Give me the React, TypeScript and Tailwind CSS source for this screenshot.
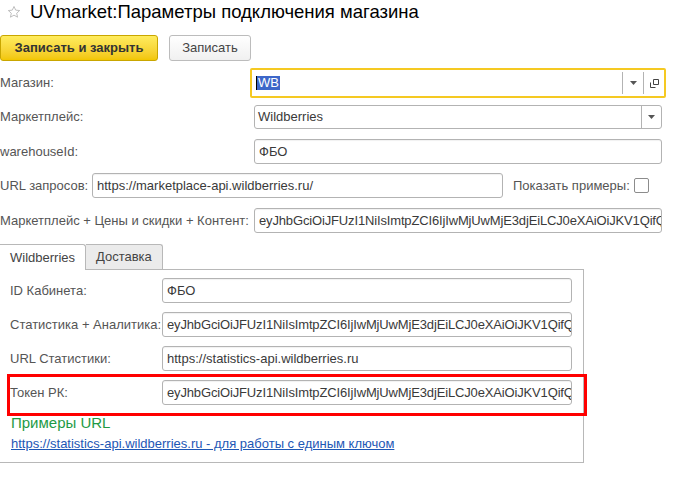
import React from "react";

const TOKEN =
  "eyJhbGciOiJFUzI1NiIsImtpZCI6IjIwMjUwMjE3djEiLCJ0eXAiOiJKV1QifQ.eyJlbnQiOjEsImV4cCI6MTc1NjA";

const Field = ({ value, className }: { value: string; className: string }) => (
  <div
    className={`h-[25px] flex items-center border border-[#b3b3b3] rounded-[3px] bg-white pl-[4px] text-[13px] text-[#3a3a3a] whitespace-nowrap overflow-hidden shadow-[inset_0_1px_1px_rgba(0,0,0,0.06)] ${className}`}
  >
    {value}
  </div>
);

const Arrow = () => (
  <svg width="7" height="4" viewBox="0 0 7 4">
    <path d="M0 0h7L3.5 4z" fill="#555" />
  </svg>
);

const Label = ({ text, className }: { text: string; className: string }) => (
  <div className={`text-[13px] text-[#555] whitespace-nowrap ${className}`}>{text}</div>
);

export default function App() {
  return (
    <div className="w-[697px] h-[491px] bg-white overflow-hidden font-['Liberation_Sans',Arial,sans-serif]">
      {/* title */}
      <div className="h-[24px] flex items-center">
        <svg width="14" height="14" viewBox="0 0 24 24" className="ml-[7px] mr-[9px]">
          <path
            d="M12 2.5l2.9 6.3 6.8.7-5.1 4.6 1.5 6.8L12 17.4l-6.1 3.5 1.5-6.8-5.1-4.6 6.8-.7z"
            fill="none"
            stroke="#b0b0b0"
            strokeWidth="1.4"
            strokeLinejoin="round"
          />
        </svg>
        <span className="text-[18.5px] text-black">UVmarket:Параметры подключения магазина</span>
      </div>

      {/* buttons */}
      <div className="mt-[11px] flex gap-[11px]">
        <div className="w-[158px] h-[26px] flex items-center justify-center rounded-[3px] border border-[#c9a600] bg-gradient-to-b from-[#ffec5c] to-[#f2c600] text-[13px] font-bold text-[#333]">
          Записать и закрыть
        </div>
        <div className="w-[82px] h-[26px] flex items-center justify-center rounded-[3px] border border-[#bcbcbc] bg-gradient-to-b from-white to-[#f0f0f0] text-[13px] text-[#444]">
          Записать
        </div>
      </div>

      {/* Магазин */}
      <div className="mt-[7px] h-[30px] flex items-center">
        <Label text="Магазин:" className="w-[250px]" />
        <div className="w-[416px] h-[30px] border-2 border-[#f5c922] rounded-[2px] flex items-center">
          <div className="flex-1 flex items-center pl-[4px]">
            <span className="w-px h-[14px] bg-black" />
            <span className="bg-[#3d67c9] text-white text-[13px] leading-[14px] px-[1px]">WB</span>
          </div>
          <div className="w-[21px] h-[22px] border-l border-[#b3b3b3] flex items-center justify-center">
            <Arrow />
          </div>
          <div className="w-[21px] h-[22px] border-l border-[#b3b3b3] flex items-center justify-center">
            <svg width="9" height="9" viewBox="0 0 9 9">
              <path d="M3.5 0.5h5v5h-5z M0.5 3.5v5h5" fill="none" stroke="#444" strokeWidth="1" />
            </svg>
          </div>
        </div>
      </div>

      {/* Маркетплейс */}
      <div className="mt-[7px] h-[24px] flex items-center">
        <Label text="Маркетплейс:" className="w-[254px]" />
        <div className="w-[408px] h-[24px] border border-[#b3b3b3] rounded-[3px] flex items-center">
          <div className="flex-1 pl-[3px] text-[13px] text-[#3a3a3a]">Wildberries</div>
          <div className="w-[20px] h-[22px] border-l border-[#b3b3b3] flex items-center justify-center">
            <Arrow />
          </div>
        </div>
      </div>

      {/* warehouseId */}
      <div className="mt-[10px] flex items-center">
        <Label text="warehouseId:" className="w-[254px]" />
        <Field value="ФБО" className="w-[408px]" />
      </div>

      {/* URL */}
      <div className="mt-[9px] flex items-center">
        <Label text="URL запросов:" className="w-[92px]" />
        <Field value="https://marketplace-api.wildberries.ru/" className="w-[411px]" />
        <Label text="Показать примеры:" className="ml-[10px] w-[121px]" />
        <div className="w-[15px] h-[15px] border border-[#8c8c8c] rounded-[2px] bg-white" />
      </div>

      {/* token */}
      <div className="mt-[10px] flex items-center">
        <Label text="Маркетплейс + Цены и скидки + Контент:" className="w-[254px]" />
        <Field value={TOKEN} className="w-[408px] h-[24px] tracking-[-0.15px]" />
      </div>

      {/* tabs */}
      <div className="mt-[10px] flex items-end h-[26px]">
        <div className="w-[86px] h-[26px] border-t border-r border-[#b8b8b8] rounded-tr-[3px] bg-white flex items-center pl-[10px] text-[13px] text-[#444] relative z-10 -mb-px">
          Wildberries
        </div>
        <div className="w-[77px] h-[25px] border-t border-r border-[#b8b8b8] rounded-tr-[3px] bg-[#ebebeb] flex items-center pl-[10px] text-[13px] text-[#444]">
          Доставка
        </div>
      </div>
      <div className="w-[584px] h-[194px] border-t border-r border-b border-[#b8b8b8] pt-[8px]">
        <div className="flex items-center">
          <Label text="ID Кабинета:" className="w-[162px] pl-[10px]" />
          <Field value="ФБО" className="w-[410px]" />
        </div>
        <div className="mt-[9px] flex items-center">
          <Label text="Статистика + Аналитика:" className="w-[162px] pl-[10px]" />
          <Field value={TOKEN} className="w-[410px] tracking-[-0.15px]" />
        </div>
        <div className="mt-[9px] flex items-center">
          <Label text="URL Статистики:" className="w-[162px] pl-[10px]" />
          <Field value="https://statistics-api.wildberries.ru" className="w-[410px]" />
        </div>
        <div className="mt-[9px] flex items-center relative">
          <Label text="Токен РК:" className="w-[162px] pl-[10px]" />
          <Field value={TOKEN} className="w-[410px] h-[24px] tracking-[-0.15px]" />
          <div className="absolute left-[7px] top-[-6px] w-[580px] h-[42px] border-[3px] border-[#ff0000]" />
        </div>
        <div className="mt-[9px] pl-[11px] text-[15px] text-[#1e9a45] leading-[18px]">Примеры URL</div>
        <div className="mt-[4px] pl-[11px] text-[13px] text-[#1d57b5] underline leading-[16px]">
          https://statistics-api.wildberries.ru - для работы с единым ключом
        </div>
      </div>
    </div>
  );
}
